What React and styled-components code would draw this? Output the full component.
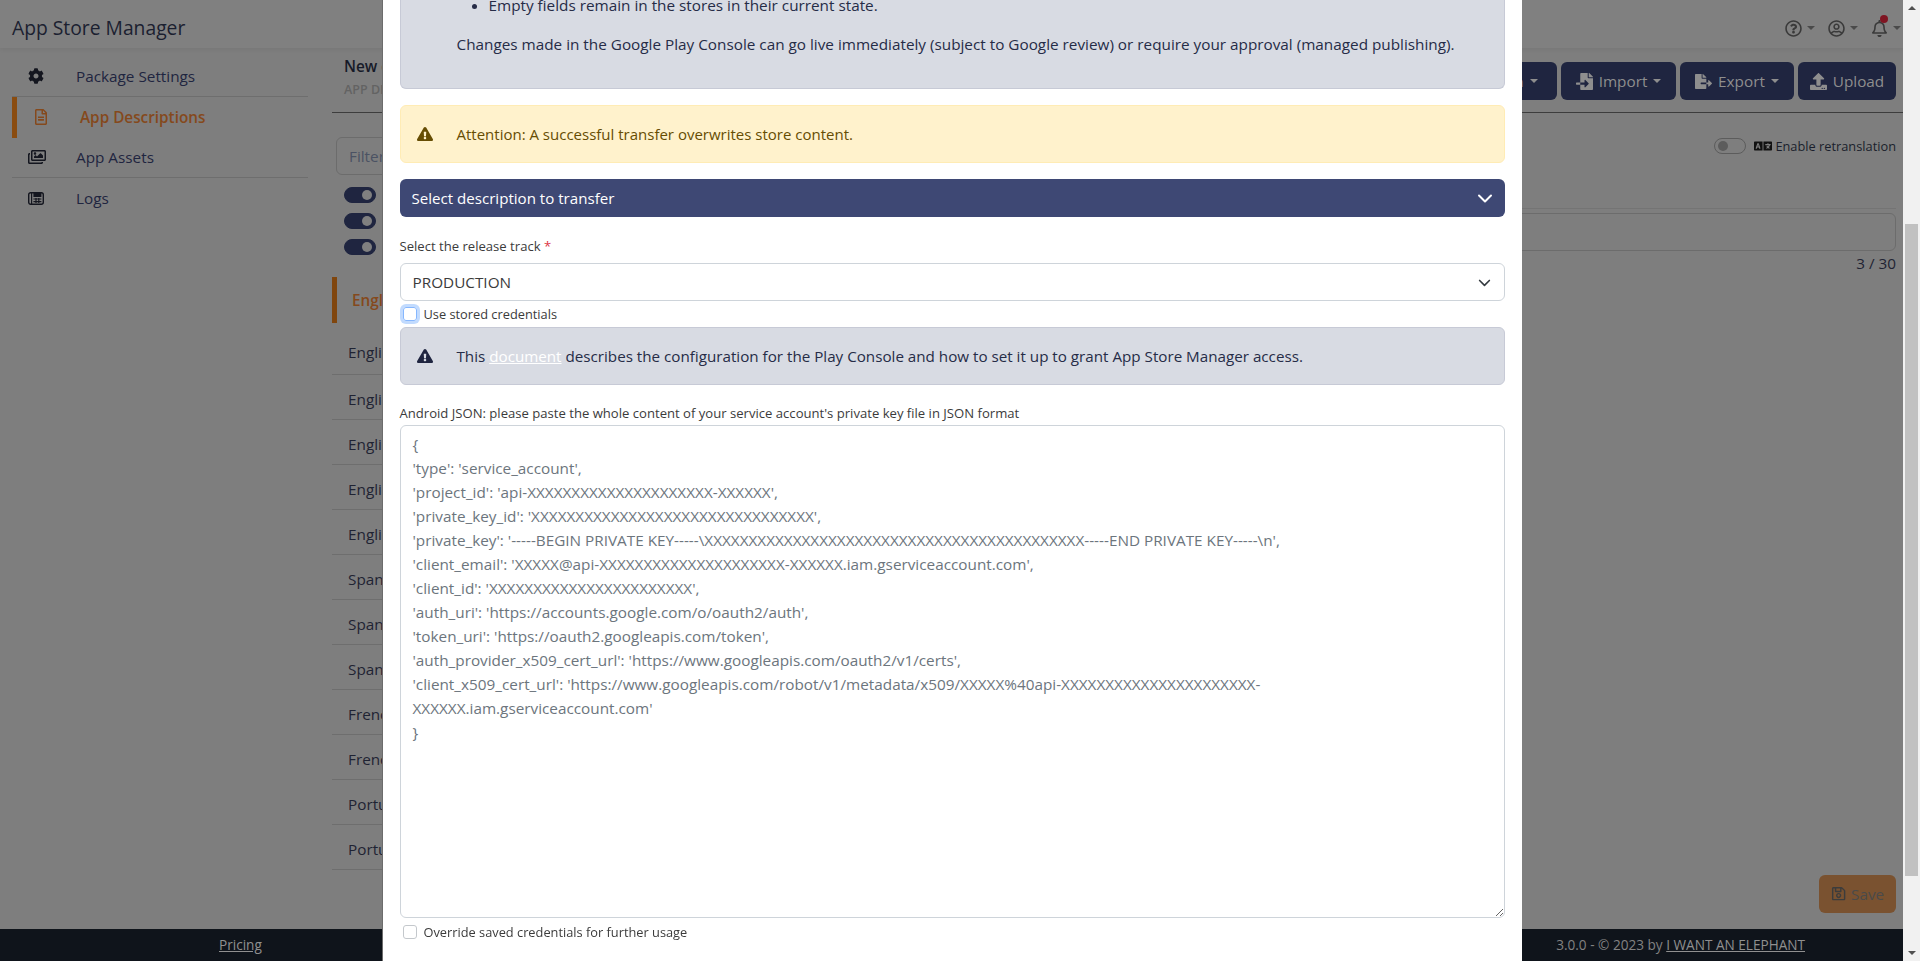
import React from 'react'
import styled, { createGlobalStyle } from 'styled-components'
import {
  FaCog, FaRegFileAlt, FaRegImages, FaRegQuestionCircle, FaRegUserCircle, FaRegBell,
  FaFileImport, FaFileExport, FaUpload, FaLanguage, FaRegSave, FaExclamationTriangle,
} from 'react-icons/fa'

const FONT = `"Open Sans", "Noto Sans", sans-serif`

const GlobalStyle = createGlobalStyle`
    html, body {
        margin: 0;
        height: 100%;
        overflow: hidden;
    }
    body {
        font-family: ${FONT};
        font-size: 15.3px;
        line-height: 24px;
        color: #1f2540;
        background: #808080;
    }
    * {
        box-sizing: border-box;
    }
`

const Page = styled.div`
    display: flex;
    flex-direction: column;
    width: 1903px;
    height: 961px;
    background: #7e7e7e;
`

const Header = styled.header`
    display: flex;
    align-items: center;
    justify-content: space-between;
    height: 48px;
    padding: 8px 2px 0 12px;
    background: #808080;
    box-shadow: 0 2px 4px rgba(0, 0, 0, 0.05);
    flex: none;
`

const Brand = styled.div`
    font-size: 19.3px;
    color: #1b2030;
`

const HeaderTools = styled.div`
    display: flex;
    gap: 13px;
    color: #3a3a3a;
`

const ToolButton = styled.div`
    position: relative;
    display: flex;
    align-items: center;
    gap: 5px;
    font-size: 17px;
`

const Caret = styled.span`
    display: inline-block;
    width: 0;
    height: 0;
    border-top: 4.5px solid ${props => props.$color || '#4a4a4a'};
    border-left: 4.5px solid transparent;
    border-right: 4.5px solid transparent;
`

const RedDot = styled.span`
    position: absolute;
    top: -5px;
    left: 9px;
    width: 8px;
    height: 8px;
    border-radius: 50%;
    background: #7f1522;
`

const Body = styled.div`
    display: flex;
    flex: 1;
    min-height: 0;
`

const Sidebar = styled.nav`
    width: 332px;
    flex: none;
    padding: 8px 24px 0 12px;
`

const NavItem = styled.div`
    display: flex;
    align-items: center;
    height: ${props => (props.$first ? '41px' : '40.5px')};
    color: ${props => (props.$active ? '#85491c' : '#1f2540')};
    font-weight: ${props => (props.$active ? 600 : 400)};
    border-left: ${props => (props.$active ? '5px solid #8a4c10' : 'none')};
    border-bottom: ${props => (props.$divider ? '1px solid #6e6e6e' : 'none')};
    padding-left: 16px;
`

const NavIcon = styled.span`
    display: flex;
    width: ${props => (props.$active ? '47px' : '48px')};
    font-size: ${props => props.$size || 16}px;
    color: ${props => (props.$active ? '#85491c' : '#14161f')};
`

const Main = styled.main`
    display: flex;
    flex-direction: column;
    flex: 1;
    min-width: 0;
`

const TopBar = styled.div`
    display: flex;
    justify-content: space-between;
    height: 65px;
    padding: 0 7px 0 12px;
    border-bottom: 1px solid #3d3d3d;
    flex: none;
`

const TitleBlock = styled.div`
    padding-top: 6px;
`

const PageTitle = styled.div`
    font-weight: 600;
    color: #161a28;
`

const PageSub = styled.div`
    font-size: 12.5px;
    font-weight: 600;
    color: #636363;
`

const Actions = styled.div`
    display: flex;
    gap: 4px;
    padding-top: 14px;
`

const ActionButton = styled.div`
    display: flex;
    align-items: center;
    justify-content: center;
    gap: 6px;
    width: ${props => props.$w}px;
    height: 38px;
    border-radius: 6px;
    background: #1f2540;
    color: #8e8e8e;
    font-size: 15.3px;
    svg {
        font-size: 17px;
    }
`

const Columns = styled.div`
    display: flex;
    flex: 1;
    min-height: 0;
`

const ListPane = styled.div`
    width: 320px;
    flex: none;
    padding-top: 24px;
`

const Filter = styled.div`
    width: 300px;
    height: 38px;
    margin-left: 4px;
    padding: 6px 12px;
    border: 1px solid #6c6c6c;
    border-radius: 6px;
    color: #4b5263;
`

const ToggleGroup = styled.div`
    display: flex;
    flex-direction: column;
    gap: 10px;
    margin: 12px 0 22px 12px;
`

const Toggle = styled.span`
    display: flex;
    align-items: center;
    justify-content: ${props => (props.$on ? 'flex-end' : 'flex-start')};
    width: 32px;
    height: 16px;
    padding: 0 3px;
    border-radius: 8px;
    background: ${props => (props.$on ? '#1f2540' : 'transparent')};
    border: 1px solid ${props => (props.$on ? '#1f2540' : '#5c5c5c')};
    &::after {
        content: '';
        width: 10px;
        height: 10px;
        border-radius: 50%;
        background: ${props => (props.$on ? '#808080' : '#5c5c5c')};
    }
`

const ActiveLang = styled.div`
    display: flex;
    align-items: center;
    height: 46px;
    margin-bottom: 7px;
    padding-left: 15px;
    border-left: 5px solid #80460e;
    color: #85491c;
    font-weight: 600;
`

const LangRow = styled.div`
    display: flex;
    align-items: center;
    height: 45px;
    padding-left: 16px;
    border-bottom: 1px solid #6e6e6e;
    color: #1f2333;
    & + & {
        padding-top: 4px;
    }
`

const DetailPane = styled.div`
    display: flex;
    flex-direction: column;
    flex: 1;
    padding: 21px 7px 16px 0;
`

const RetransRow = styled.div`
    display: flex;
    align-items: center;
    justify-content: flex-end;
    font-size: 12.8px;
    color: #1a1e2c;
`

const RetransToggle = styled(Toggle)`
    margin-right: 8px;
`

const LanguageIcon = styled(FaLanguage)`
    margin-right: 3px;
    font-size: 18px;
    color: #111;
`

const FieldRule = styled.div`
    height: 1px;
    margin-top: 50px;
    background: #747474;
`

const FieldBox = styled.div`
    height: 38px;
    margin-top: 4px;
    border: 1px solid #6c6c6c;
    border-radius: 6px;
`

const Counter = styled.div`
    text-align: right;
    color: #1f2333;
`

const SaveButton = styled.div`
    display: flex;
    align-items: center;
    justify-content: center;
    gap: 5px;
    align-self: flex-end;
    width: 77px;
    height: 38px;
    margin-top: auto;
    border-radius: 6px;
    background: #7a5230;
    color: #4a4a4a;
    svg {
        color: #3c3c3c;
    }
`

const Footer = styled.footer`
    display: flex;
    align-items: center;
    justify-content: space-between;
    height: 32px;
    flex: none;
    padding-left: 219px;
    padding-right: 98px;
    background: #0f141b;
    color: #828282;
    font-size: 13.6px;
`

const FooterLink = styled.a`
    color: #909090;
    text-decoration: underline;
`

/* modal sits over the dimmed page, scrollbar is its own track */
const Overlay = styled.div`
    position: fixed;
    inset: 0;
    display: flex;
    justify-content: space-between;
    overflow: hidden;
`

const Dialog = styled.div`
    display: flex;
    flex-direction: column;
    width: 1140px;
    height: 961px;
    margin-left: 381.5px;
    padding: 0 17px;
    background: #fff;
    border-left: 1px solid #6c6c6c;
`

const Alert = styled.div`
    display: flex;
    align-items: center;
    min-height: 58px;
    margin-bottom: ${props => props.$mb ?? 16}px;
    padding: 16px;
    border: 1px solid ${props => (props.$warn ? '#ffecb5' : '#c7cad6')};
    border-radius: 6px;
    background: ${props => (props.$warn ? '#fff2cc' : '#d8dbe3')};
    color: ${props => (props.$warn ? '#664d03' : '#262c47')};
    font-size: ${props => props.$fs || 15.3}px;
`

const ClippedAlert = styled(Alert)`
    display: block;
    height: 89px;
    min-height: 0;
    padding: 0 16px 0 56px;
    border-top: none;
    border-top-left-radius: 0;
    border-top-right-radius: 0;
    overflow: hidden;
`

const BulletList = styled.ul`
    margin: -7px 0 15px;
    padding-left: 32px;
`

const AlertIcon = styled.span`
    display: flex;
    flex: none;
    width: 40px;
    font-size: 16px;
    color: ${props => (props.$warn ? '#664d03' : '#1f2540')};
`

const DocLink = styled.a`
    color: #fff;
    text-decoration: underline;
`

const AccordionHead = styled.div`
    display: flex;
    align-items: center;
    justify-content: space-between;
    height: 38px;
    padding: 0 12px;
    border-radius: 6px;
    background: #3e4874;
    color: #fff;
    font-size: 15.1px;
`

const FieldLabel = styled.label`
    display: block;
    margin-top: ${props => props.$mt}px;
    margin-bottom: ${props => props.$mb}px;
    font-size: 13.1px;
    line-height: 21px;
    color: #3b3b3b;
`

const Required = styled.span`
    color: #dc3545;
`

const SelectBox = styled.div`
    display: flex;
    align-items: center;
    justify-content: space-between;
    height: 38px;
    padding: 0 13px 0 12px;
    border: 1px solid #ced4da;
    border-radius: 6px;
    color: #3b3b3b;
`

const CheckRow = styled.label`
    display: flex;
    align-items: center;
    gap: 7px;
    height: ${props => props.$h}px;
    padding-left: 3px;
    font-size: 12.8px;
    color: #3b3b3b;
`

const CheckBox = styled.span`
    width: 14px;
    height: 14px;
    flex: none;
    border-radius: 3px;
    border: 1px solid ${props => (props.$focus ? '#86b7fe' : '#c4c8cc')};
    box-shadow: ${props => (props.$focus ? '0 0 0 3px rgba(13, 110, 253, 0.25)' : 'none')};
`

const JsonArea = styled.textarea`
    display: block;
    width: 100%;
    height: 493px;
    padding: 6px 12px;
    border: 1px solid #ced4da;
    border-radius: 6px;
    outline: none;
    font-family: ${FONT};
    font-size: 15.3px;
    line-height: 24px;
    color: #6c757d;
`

const ScrollTrack = styled.div`
    display: flex;
    flex-direction: column;
    align-items: center;
    justify-content: space-between;
    width: 17px;
    height: 961px;
    padding: 6px 0;
    background: #f1f1f1;
`

const ScrollThumb = styled.div`
    position: absolute;
    top: 224px;
    right: 2px;
    width: 13px;
    height: 652px;
    background: #c1c1c1;
`

const ScrollArrow = styled.span`
    width: 0;
    height: 0;
    border-left: 4px solid transparent;
    border-right: 4px solid transparent;
    ${props => (props.$up ? 'border-bottom: 4px solid #505050;' : 'border-top: 4px solid #505050;')}
`

const Chevron = ({ size, color, width }) => (
  <svg width={size} height={size} viewBox="0 0 16 16" fill="none">
    <path d="M2 5.5 8 11.5 14 5.5" stroke={color} strokeWidth={width} strokeLinecap="round" strokeLinejoin="round" />
  </svg>
)

// logs icon: rounded device outline with a screen and a key grid
const LogsIcon = () => (
  <svg width="16" height="14" viewBox="0 0 16 14" fill="none">
    <rect x="0.7" y="1.7" width="14.6" height="11.6" rx="2" stroke="#14161f" strokeWidth="1.4" />
    <path d="M3.6 2v11" stroke="#14161f" strokeWidth="1.2" />
    <rect x="5.4" y="1" width="8" height="5" fill="#14161f" />
    <path d="M5.4 8h8M5.4 10.6h8M8 7v5M10.8 7v5" stroke="#14161f" strokeWidth="1.2" />
  </svg>
)

const languages = [
  'English (AU)', 'English (CA)', 'English (GB)', 'English (IN)', 'English (SG)',
  'Spanish (ES)', 'Spanish (MX)', 'Spanish (US)', 'French (CA)', 'French (FR)',
  'Portuguese (BR)', 'Portuguese (PT)',
]

const jsonSample = `{
'type': 'service_account',
'project_id': 'api-XXXXXXXXXXXXXXXXXXXXX-XXXXXX',
'private_key_id': 'XXXXXXXXXXXXXXXXXXXXXXXXXXXXXXXX',
'private_key': '-----BEGIN PRIVATE KEY-----\\XXXXXXXXXXXXXXXXXXXXXXXXXXXXXXXXXXXXXXXXXXX-----END PRIVATE KEY-----\\n',
'client_email': 'XXXXX@api-XXXXXXXXXXXXXXXXXXXXX-XXXXXX.iam.gserviceaccount.com',
'client_id': 'XXXXXXXXXXXXXXXXXXXXXXX',
'auth_uri': 'https://accounts.google.com/o/oauth2/auth',
'token_uri': 'https://oauth2.googleapis.com/token',
'auth_provider_x509_cert_url': 'https://www.googleapis.com/oauth2/v1/certs',
'client_x509_cert_url': 'https://www.googleapis.com/robot/v1/metadata/x509/XXXXX%40api-XXXXXXXXXXXXXXXXXXXXXX-
XXXXXX.iam.gserviceaccount.com'
}`

export default function App() {
  return (
    <>
      <GlobalStyle />
      <Page>
        <Header>
          <Brand>App Store Manager</Brand>
          <HeaderTools>
            <ToolButton><FaRegQuestionCircle /><Caret /></ToolButton>
            <ToolButton><FaRegUserCircle /><Caret /></ToolButton>
            <ToolButton><FaRegBell /><RedDot /><Caret /></ToolButton>
          </HeaderTools>
        </Header>
        <Body>
          <Sidebar>
            <NavItem $first $divider><NavIcon><FaCog /></NavIcon>Package Settings</NavItem>
            <NavItem $active><NavIcon $active><FaRegFileAlt /></NavIcon>App Descriptions</NavItem>
            <NavItem $divider><NavIcon $size={18}><FaRegImages /></NavIcon>App Assets</NavItem>
            <NavItem><NavIcon><LogsIcon /></NavIcon>Logs</NavItem>
          </Sidebar>
          <Main>
            <TopBar>
              <TitleBlock>
                <PageTitle>New description</PageTitle>
                <PageSub>APP DESCRIPTIONS</PageSub>
              </TitleBlock>
              <Actions>
                <ActionButton $w={156}><FaLanguage />Translation<Caret $color="#8e8e8e" /></ActionButton>
                <ActionButton $w={115}><FaFileImport />Import<Caret $color="#8e8e8e" /></ActionButton>
                <ActionButton $w={114}><FaFileExport />Export<Caret $color="#8e8e8e" /></ActionButton>
                <ActionButton $w={98}><FaUpload />Upload</ActionButton>
              </Actions>
            </TopBar>
            <Columns>
              <ListPane>
                <Filter>Filter</Filter>
                <ToggleGroup>
                  <Toggle $on />
                  <Toggle $on />
                  <Toggle $on />
                </ToggleGroup>
                <ActiveLang>English (US)</ActiveLang>
                {languages.map(name => <LangRow key={name}>{name}</LangRow>)}
              </ListPane>
              <DetailPane>
                <RetransRow>
                  <RetransToggle />
                  <LanguageIcon />
                  Enable retranslation
                </RetransRow>
                <FieldRule />
                <FieldBox />
                <Counter>3 / 30</Counter>
                <SaveButton><FaRegSave />Save</SaveButton>
              </DetailPane>
            </Columns>
          </Main>
        </Body>
        <Footer>
          <FooterLink>Pricing</FooterLink>
          <span>3.0.0 - © 2023 by <FooterLink>I WANT AN ELEPHANT</FooterLink></span>
        </Footer>
      </Page>

      <Overlay>
        <Dialog>
          <ClippedAlert>
            <BulletList>
              <li>Empty fields remain in the stores in their current state.</li>
            </BulletList>
            Changes made in the Google Play Console can go live immediately (subject to Google review) or require your approval (managed publishing).
          </ClippedAlert>
          <Alert $warn $fs={15}>
            <AlertIcon $warn><FaExclamationTriangle /></AlertIcon>
            Attention: A successful transfer overwrites store content.
          </Alert>
          <AccordionHead>
            Select description to transfer
            <Chevron size={16} color="#fff" width={2} />
          </AccordionHead>
          <FieldLabel $mt={19} $mb={6}>Select the release track <Required>*</Required></FieldLabel>
          <SelectBox>
            PRODUCTION
            <Chevron size={13} color="#343a40" width={2} />
          </SelectBox>
          <CheckRow $h={26}><CheckBox $focus />Use stored credentials</CheckRow>
          <Alert $mb={0} $fs={15.2}>
            <AlertIcon><FaExclamationTriangle /></AlertIcon>
            <span>This <DocLink>document</DocLink> describes the configuration for the Play Console and how to set it up to grant App Store Manager access.</span>
          </Alert>
          <FieldLabel $mt={18} $mb={1}>Android JSON: please paste the whole content of your service account's private key file in JSON format</FieldLabel>
          <JsonArea readOnly defaultValue={jsonSample} />
          <CheckRow $h={28}><CheckBox />Override saved credentials for further usage</CheckRow>
        </Dialog>
        <ScrollTrack>
          <ScrollArrow $up />
          <ScrollThumb />
          <ScrollArrow />
        </ScrollTrack>
      </Overlay>
    </>
  )
}
